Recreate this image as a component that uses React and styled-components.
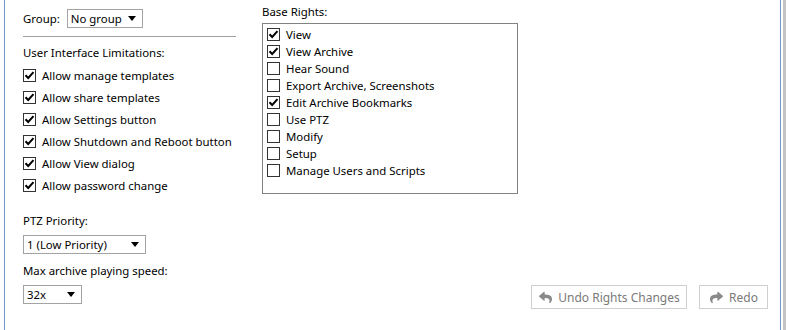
import React from "react";
import styled, { createGlobalStyle } from "styled-components";
import { FaReply, FaShare } from "react-icons/fa";

const GlobalStyle = createGlobalStyle`
  body {
    margin: 0;
    background: #ffffff;
    font-family: "Noto Sans", "Open Sans", sans-serif;
    font-size: 11.4px;
    color: #000;
  }
`;

const limitations = [
  { label: "Allow manage templates", checked: true },
  { label: "Allow share templates", checked: true },
  { label: "Allow Settings button", checked: true },
  { label: "Allow Shutdown and Reboot button", checked: true },
  { label: "Allow View dialog", checked: true },
  { label: "Allow password change", checked: true },
];

const rights = [
  { label: "View", checked: true },
  { label: "View Archive", checked: true },
  { label: "Hear Sound", checked: false },
  { label: "Export Archive, Screenshots", checked: false },
  { label: "Edit Archive Bookmarks", checked: true },
  { label: "Use PTZ", checked: false },
  { label: "Modify", checked: false },
  { label: "Setup", checked: false },
  { label: "Manage Users and Scripts", checked: false },
];

const Check = ({ checked }) => (
  <Box>
    {checked && (
      <svg width="11" height="11" viewBox="0 0 11 11">
        <path
          d="M1.5 5.2 L4.2 8 L9.5 2.2"
          fill="none"
          stroke="#000"
          strokeWidth="2"
        />
      </svg>
    )}
  </Box>
);

const Select = ({ value, width }) => (
  <SelectBox $width={width}>
    <span>{value}</span>
    <Arrow />
  </SelectBox>
);

const App = () => {
  return (
    <>
      <GlobalStyle />
      <Frame>
        <Panel>
          <LeftColumn>
            <GroupRow>
              <span>Group:</span>
              <Select value="No group" width={76} />
            </GroupRow>
            <Separator />
            <Caption $top={8}>User Interface Limitations:</Caption>
            <CheckList>
              {limitations.map((item) => (
                <CheckRow key={item.label}>
                  <Check checked={item.checked} />
                  <span>{item.label}</span>
                </CheckRow>
              ))}
            </CheckList>
            <Caption $top={17}>PTZ Priority:</Caption>
            <Field>
              <Select value="1 (Low Priority)" width={123} />
            </Field>
            <Caption $top={9}>Max archive playing speed:</Caption>
            <Field>
              <Select value="32x" width={59} />
            </Field>
          </LeftColumn>
          <RightColumn>
            <Caption $top={4}>Base Rights:</Caption>
            <ListBox>
              {rights.map((item) => (
                <ListRow key={item.label}>
                  <Check checked={item.checked} />
                  <span>{item.label}</span>
                </ListRow>
              ))}
            </ListBox>
            <Buttons>
              <Button $width={156}>
                <FaReply />
                Undo Rights Changes
              </Button>
              <Button $width={69}>
                <FaShare />
                Redo
              </Button>
            </Buttons>
          </RightColumn>
        </Panel>
        <Edge />
      </Frame>
    </>
  );
};

const Frame = styled.div`
  width: 786px;
  height: 330px;
  display: flex;
  background: #fff;
  padding-left: 4px;
  box-sizing: border-box;
  overflow: hidden;
`;

const Panel = styled.div`
  width: 777px;
  height: 330px;
  box-sizing: border-box;
  border-left: 1px solid #7b97c8;
  border-right: 1px solid #7b97c8;
  display: grid;
  grid-template-columns: 257px 1fr;
`;

const Edge = styled.div`
  margin-left: 2px;
  width: 3px;
  background: #c4c4c4;
`;

const LeftColumn = styled.div`
  padding: 9px 0 0 18px;
  display: flex;
  flex-direction: column;
  align-items: flex-start;
`;

const RightColumn = styled.div`
  display: flex;
  flex-direction: column;
  align-items: flex-start;
  padding-right: 12px;
`;

const GroupRow = styled.div`
  display: flex;
  align-items: center;
  gap: 7px;
  height: 19px;
`;

const Separator = styled.div`
  margin-top: 8px;
  width: 213px;
  height: 1px;
  background: #a0a0a0;
`;

const Caption = styled.div`
  margin-top: ${(p) => p.$top}px;
  line-height: 16px;
  height: 16px;
  white-space: nowrap;
`;

const CheckList = styled.div`
  margin-top: 3px;
  display: flex;
  flex-direction: column;
`;

const CheckRow = styled.div`
  height: 22px;
  display: flex;
  align-items: center;
  gap: 6px;
  white-space: nowrap;
`;

const Field = styled.div`
  margin-top: 6px;
`;

const SelectBox = styled.div`
  width: ${(p) => p.$width}px;
  height: 19px;
  box-sizing: border-box;
  border: 1px solid #a3a3a3;
  display: flex;
  align-items: center;
  justify-content: space-between;
  padding: 0 6px 0 3px;
  line-height: 16px;
  white-space: nowrap;
`;

const Arrow = styled.div`
  width: 0;
  height: 0;
  border-left: 4.5px solid transparent;
  border-right: 4.5px solid transparent;
  border-top: 5px solid #000;
`;

const Box = styled.div`
  width: 13px;
  height: 13px;
  box-sizing: border-box;
  border: 1px solid #333;
  background: #fff;
  display: flex;
  align-items: center;
  justify-content: center;
  flex-shrink: 0;
`;

const ListBox = styled.div`
  margin-top: 3px;
  width: 256px;
  height: 171px;
  box-sizing: border-box;
  border: 1px solid #828282;
  padding: 2px 0 0 4px;
  display: flex;
  flex-direction: column;
`;

const ListRow = styled.div`
  height: 17px;
  display: flex;
  align-items: center;
  gap: 6px;
  white-space: nowrap;
`;

const Buttons = styled.div`
  margin-top: 91px;
  align-self: flex-end;
  display: flex;
  gap: 12px;
`;

const Button = styled.button`
  width: ${(p) => p.$width}px;
  height: 24px;
  box-sizing: border-box;
  border: 1px solid #cfcfcf;
  background: #fff;
  color: #7a7a7a;
  font-family: inherit;
  font-size: 12px;
  display: flex;
  align-items: center;
  justify-content: center;
  gap: 5px;
  padding: 0;
  svg {
    width: 15px;
    height: 13px;
    color: #8a8a8a;
  }
`;

export default App;
